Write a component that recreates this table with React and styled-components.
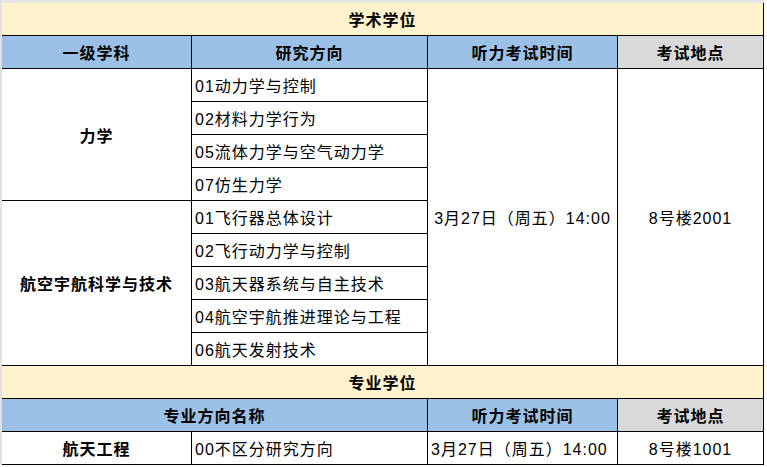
import React from "react";
import styled, { createGlobalStyle } from "styled-components";

const GlobalStyle = createGlobalStyle`
  html, body {
    margin: 0;
    padding: 0;
    background: #ffffff;
  }
  body {
    font-family: "Liberation Sans", "Noto Sans CJK SC", sans-serif;
  }
`;

const academic = [
  {
    subject: "力学",
    directions: ["01动力学与控制", "02材料力学行为", "05流体力学与空气动力学", "07仿生力学"],
  },
  {
    subject: "航空宇航科学与技术",
    directions: [
      "01飞行器总体设计",
      "02飞行动力学与控制",
      "03航天器系统与自主技术",
      "04航空宇航推进理论与工程",
      "06航天发射技术",
    ],
  },
];

const totalRows = academic.reduce((n, g) => n + g.directions.length, 0);

export default function App() {
  let rowCursor = 3;

  return (
    <>
      <GlobalStyle />
      <Sheet>
        <Grid>
          {/* 学术学位 */}
          <Title>学术学位</Title>
          <Head>一级学科</Head>
          <Head>研究方向</Head>
          <Head>听力考试时间</Head>
          <Head $tone="gray">考试地点</Head>

          {academic.map((group) => {
            const start = rowCursor;
            rowCursor += group.directions.length;
            return (
              <React.Fragment key={group.subject}>
                <Subject style={{ gridRow: `${start} / span ${group.directions.length}` }}>
                  {group.subject}
                </Subject>
                {group.directions.map((d, i) => (
                  <Direction key={d} style={{ gridRow: start + i }}>
                    {d}
                  </Direction>
                ))}
              </React.Fragment>
            );
          })}
          <Merged style={{ gridRow: `3 / span ${totalRows}`, gridColumn: 3 }}>
            3月27日（周五）14:00
          </Merged>
          <Merged style={{ gridRow: `3 / span ${totalRows}`, gridColumn: 4 }}>
            8号楼2001
          </Merged>

          {/* 专业学位 */}
          <Title>专业学位</Title>
          <Head $span={2}>专业方向名称</Head>
          <Head>听力考试时间</Head>
          <Head $tone="gray">考试地点</Head>

          <Subject>航天工程</Subject>
          <Direction>00不区分研究方向</Direction>
          <Direction>3月27日（周五）14:00</Direction>
          <Plain>8号楼1001</Plain>
        </Grid>
      </Sheet>
    </>
  );
}

const Sheet = styled.div`
  border-top: 3px solid #e4e4e4;
  border-left: 2px solid #e2e2e2;
  width: 762px;
`;

const Grid = styled.div`
  display: grid;
  grid-template-columns: 190px 236px 190px 146px;
  grid-auto-rows: 33px;
  font-size: 16px;
  letter-spacing: 1px;
  color: #000;
`;

// every cell sits a little low, like a spreadsheet cell
const Cell = styled.div`
  box-sizing: border-box;
  display: flex;
  align-items: center;
  padding-top: 4px;
  border-right: 1px solid #000;
  border-bottom: 1px solid #000;
  line-height: 1;
  white-space: nowrap;
  overflow: hidden;
`;

const Title = styled(Cell)`
  grid-column: 1 / -1;
  justify-content: center;
  background: #fff2cc;
  font-weight: 700;
`;

const Head = styled(Cell)`
  grid-column: span ${(p) => p.$span || 1};
  justify-content: center;
  background: ${(p) => (p.$tone === "gray" ? "#d9d9d9" : "#9bc2e6")};
  font-weight: 700;
`;

const Subject = styled(Cell)`
  grid-column: 1;
  justify-content: center;
  font-weight: 700;
`;

const Direction = styled(Cell)`
  padding-left: 3px;
`;

const Merged = styled(Cell)`
  justify-content: center;
`;

const Plain = styled(Cell)`
  justify-content: center;
`;
